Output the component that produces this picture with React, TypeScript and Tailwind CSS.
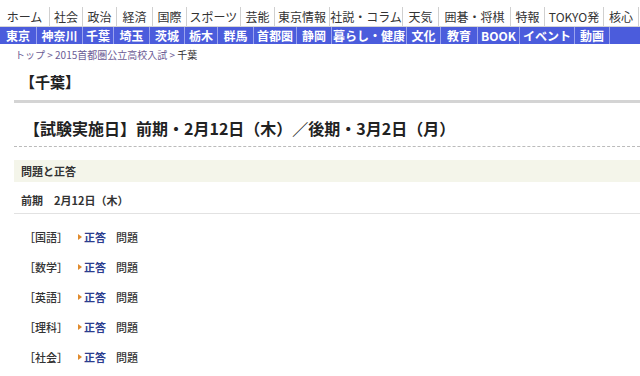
import React from "react";

const topNav: [string, number][] = [
  ["ホーム", 50],
  ["社会", 33],
  ["政治", 34],
  ["経済", 36],
  ["国際", 34],
  ["スポーツ", 54],
  ["芸能", 34],
  ["東京情報", 55],
  ["社説・コラム", 73],
  ["天気", 36],
  ["囲碁・将棋", 72],
  ["特報", 34],
  ["TOKYO発", 59],
  ["核心", 35],
];

const areaNav: [string, number][] = [
  ["東京", 37],
  ["神奈川", 46],
  ["千葉", 31],
  ["埼玉", 36],
  ["茨城", 35],
  ["栃木", 33],
  ["群馬", 36],
  ["首都圏", 43],
  ["静岡", 35],
  ["暮らし・健康", 75],
  ["文化", 34],
  ["教育", 37],
  ["BOOK", 42],
  ["イベント", 55],
  ["動画", 35],
];

const subjects = ["国語", "数学", "英語", "理科", "社会"];

export default function App() {
  return (
    <div
      className="w-[640px] h-[376px] overflow-hidden bg-white text-[#333]"
      style={{ fontFamily: '"Noto Sans CJK JP", "Noto Sans", sans-serif' }}
    >
      {/* グローバルナビ */}
      <div className="pt-[7px]">
        <ul className="flex h-[20px] border-b border-[#d6d6d6]">
          {topNav.map(([label, w]) => (
            <li
              key={label}
              style={{ width: w }}
              className="shrink-0 flex items-center justify-center border-r border-[#d0d0d0] text-[12px] leading-none text-[#333] whitespace-nowrap"
            >
              {label}
            </li>
          ))}
        </ul>
        <ul className="flex h-[17px] bg-[#4b5cdc]">
          {areaNav.map(([label, w]) => (
            <li
              key={label}
              style={{ width: w }}
              className="shrink-0 flex items-center justify-center border-r border-[#9aa3ee] text-[12px] leading-none font-bold text-white whitespace-nowrap"
            >
              {label}
            </li>
          ))}
        </ul>
      </div>

      {/* パンくず */}
      <div className="pl-[15px] pt-[3px] text-[10px] leading-[16px] text-[#6b5b95]">
        トップ &gt; 2015首都圏公立高校入試 &gt; <span className="text-[#333]">千葉</span>
      </div>

      <div className="pl-[14px]">
        <h1 className="pl-[6px] pt-[9px] pb-[8px] text-[15px] leading-[20px] font-bold text-[#222]">
          【千葉】
        </h1>
        <div className="h-[3px] bg-[#d4d4d4]" />

        <h2 className="pl-[10px] pt-[14px] pb-[7px] text-[16px] leading-[22px] font-bold text-[#222] border-b border-dashed border-[#bbb]">
          【試験実施日】前期・2月12日（木）／後期・3月2日（月）
        </h2>

        <div className="mt-[13px] h-[22px] flex items-center pl-[7px] bg-[#f4f5ea] text-[11px] font-bold text-[#333]">
          問題と正答
        </div>

        <div className="pt-[10px] pb-[5px] pl-[7px] leading-[16px] border-b border-[#e2e2e2] text-[11px] font-bold text-[#333]">
          前期　2月12日（木）
        </div>

        <ul className="pt-[8px] pl-[10px]">
          {subjects.map((s) => (
            <li key={s} className="h-[30px] flex items-center text-[11px] font-medium">
              <span className="w-[54px] text-[#333]">［{s}］</span>
              <span className="w-0 h-0 border-y-[3px] border-y-transparent border-l-[4px] border-l-[#e08a2c] mr-[2px]" />
              <span className="w-[32px] font-bold text-[#2b3d8f]">正答</span>
              <span className="text-[#333]">問題</span>
            </li>
          ))}
        </ul>
      </div>
    </div>
  );
}
